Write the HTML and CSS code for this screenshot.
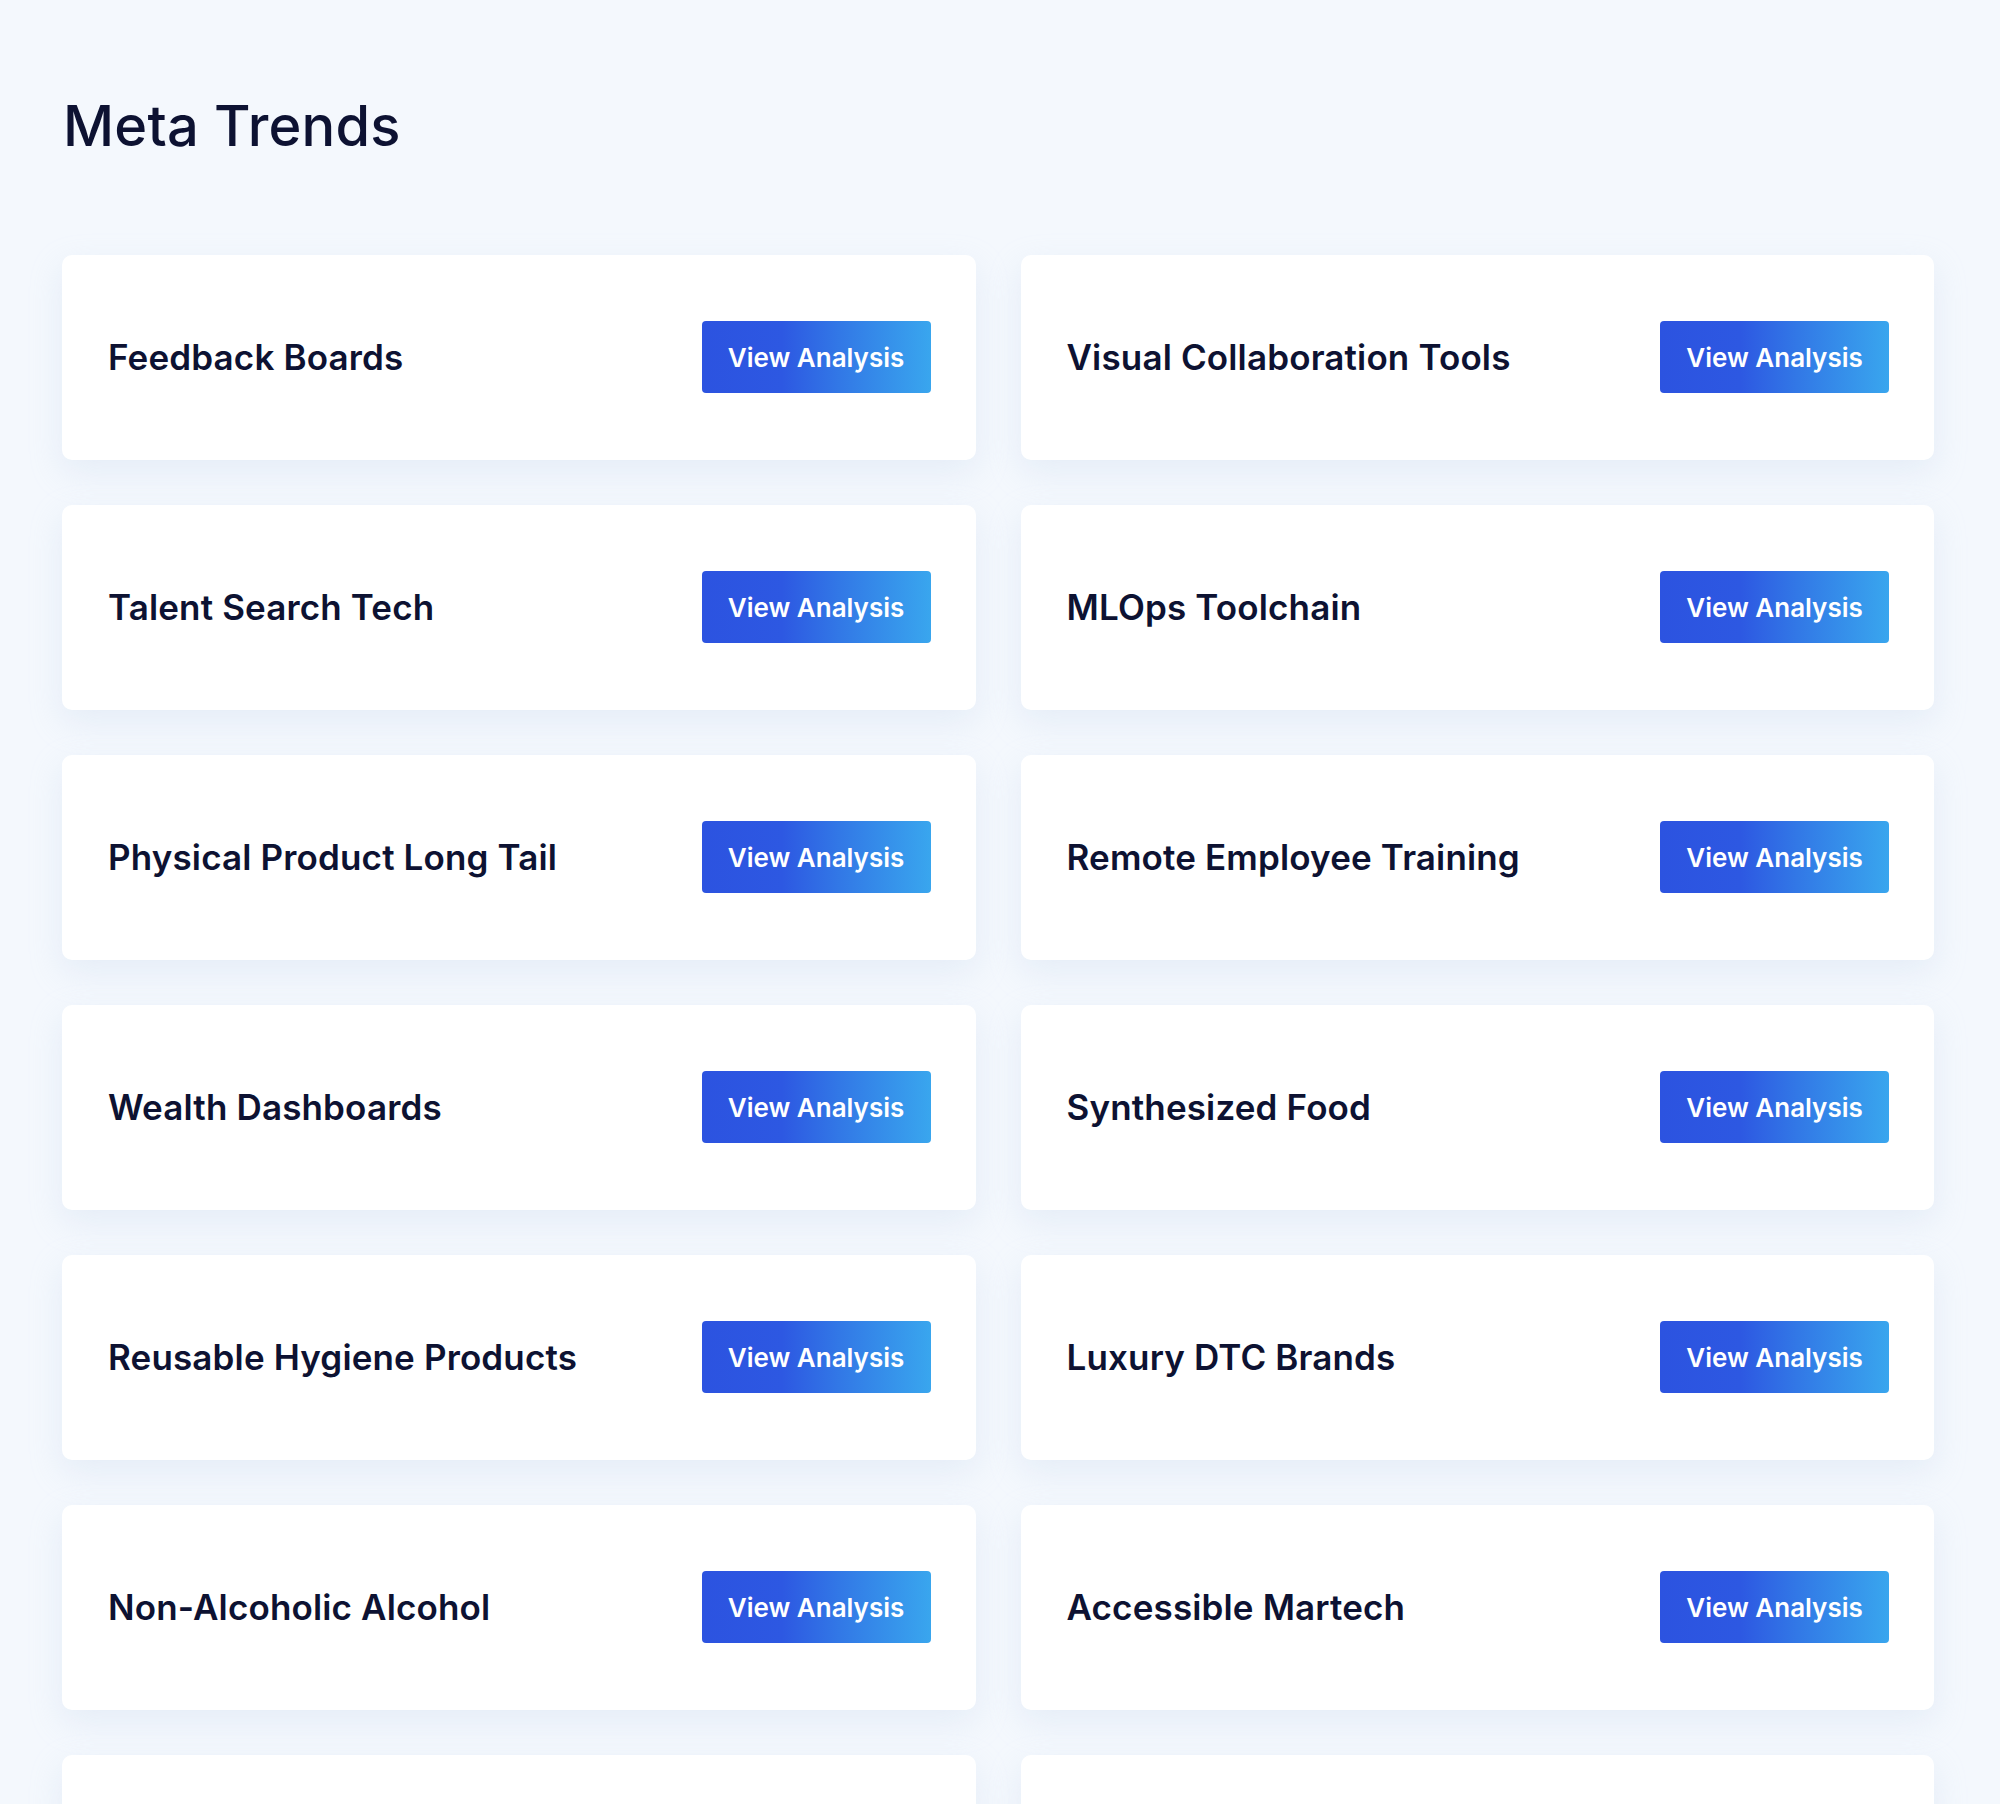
FILE: index.html
```html
<!DOCTYPE html>
<html lang="en">
<head>
<meta charset="utf-8">
<title>Meta Trends</title>
<link rel="stylesheet" href="styles.css">
</head>
<body>
<main class="page">
  <h1 class="page-title">Meta Trends</h1>
  <section class="trend-grid">
    <div class="trend-card"><span class="trend-name">Feedback Boards</span><a class="btn" href="#">View Analysis</a></div>
    <div class="trend-card"><span class="trend-name">Visual Collaboration Tools</span><a class="btn" href="#">View Analysis</a></div>
    <div class="trend-card"><span class="trend-name">Talent Search Tech</span><a class="btn" href="#">View Analysis</a></div>
    <div class="trend-card"><span class="trend-name">MLOps Toolchain</span><a class="btn" href="#">View Analysis</a></div>
    <div class="trend-card"><span class="trend-name">Physical Product Long Tail</span><a class="btn" href="#">View Analysis</a></div>
    <div class="trend-card"><span class="trend-name">Remote Employee Training</span><a class="btn" href="#">View Analysis</a></div>
    <div class="trend-card"><span class="trend-name">Wealth Dashboards</span><a class="btn" href="#">View Analysis</a></div>
    <div class="trend-card"><span class="trend-name">Synthesized Food</span><a class="btn" href="#">View Analysis</a></div>
    <div class="trend-card"><span class="trend-name">Reusable Hygiene Products</span><a class="btn" href="#">View Analysis</a></div>
    <div class="trend-card"><span class="trend-name">Luxury DTC Brands</span><a class="btn" href="#">View Analysis</a></div>
    <div class="trend-card"><span class="trend-name">Non-Alcoholic Alcohol</span><a class="btn" href="#">View Analysis</a></div>
    <div class="trend-card"><span class="trend-name">Accessible Martech</span><a class="btn" href="#">View Analysis</a></div>
    <div class="trend-card trend-card-partial"></div>
    <div class="trend-card trend-card-partial"></div>
  </section>
</main>
</body>
</html>
```

FILE: styles.css
```css
html, body {
  margin: 0;
  padding: 0;
}
body {
  background: #f4f8fd;
  font-family: Inter, "Noto Sans", "Liberation Sans", sans-serif;
  color: #0d1232;
}
.page {
  padding: 0 66px 0 62px;
}
.page-title {
  margin: 0;
  padding-top: 92px;
  padding-left: 1px;
  height: 255px;
  box-sizing: border-box;
  font-size: 56px;
  line-height: 68px;
  font-weight: 500;
  letter-spacing: 0.2px;
  color: #0d1232;
}
.trend-grid {
  display: grid;
  grid-template-columns: 1fr 1fr;
  column-gap: 45px;
  row-gap: 45px;
}
.trend-card {
  background: #ffffff;
  border-radius: 10px;
  box-shadow: 0 12px 32px rgba(190, 208, 235, 0.28);
  padding: 66px 45px 67px 46px;
  display: flex;
  align-items: center;
  justify-content: space-between;
}
.trend-card-partial {
  min-height: 205px;
  box-sizing: border-box;
}
.trend-name {
  font-size: 35px;
  font-weight: 600;
  letter-spacing: 0.15px;
  color: #0d1232;
}
.btn {
  display: flex;
  align-items: center;
  justify-content: center;
  width: 229px;
  height: 72px;
  box-sizing: border-box;
  border-radius: 4px;
  background: linear-gradient(90deg, #2c53e0 0%, #2d58e2 35%, #3278e6 60%, #39a6ee 100%);
  color: #ffffff;
  font-size: 26px;
  font-weight: 600;
  text-decoration: none;
}
```
